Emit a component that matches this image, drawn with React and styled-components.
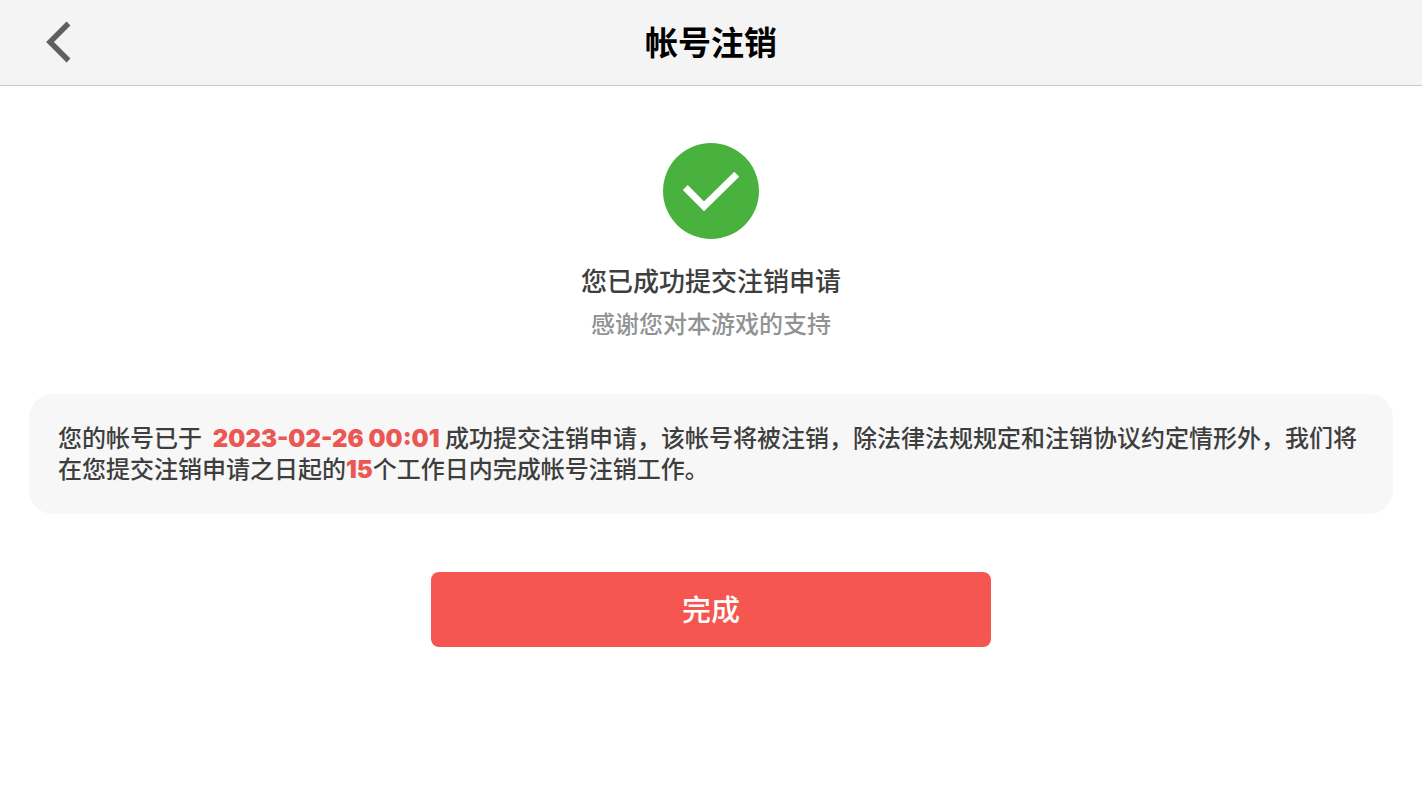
import React from "react";
import styled, { createGlobalStyle } from "styled-components";

const GlobalStyle = createGlobalStyle`
  * {
    box-sizing: border-box;
  }

  body {
    margin: 0;
    background: #ffffff;
    color: #3e3e3e;
    font-family: "Noto Sans CJK SC", sans-serif;
    font-weight: 500;
  }
`;

const Header = styled.header`
  display: grid;
  grid-template-columns: 1fr auto 1fr;
  align-items: center;
  height: 86px;
  padding: 0 36px;
  background: #f4f4f4;
  border-bottom: 1px solid #c8c8c8;
`;

const BackButton = styled.button`
  display: flex;
  align-items: center;
  justify-content: center;
  justify-self: start;
  width: 44px;
  height: 44px;
  padding: 0;
  border: 0;
  background: transparent;
  color: #5f5f5f;
  cursor: pointer;
`;

const Title = styled.h1`
  margin: 0;
  padding-bottom: 4px;
  color: #000000;
  font-size: 33px;
  line-height: 48px;
  font-weight: 700;
`;

const Main = styled.main`
  display: flex;
  flex-direction: column;
  align-items: center;
  padding: 57px 29px;
`;

const SuccessIcon = styled.svg`
  display: block;
  width: 96px;
  height: 96px;
`;

const Status = styled.h2`
  margin: 21px 0 0;
  font-size: 26px;
  line-height: 40px;
  font-weight: 500;
`;

const Thanks = styled.p`
  margin: 5px 0 0;
  color: #929292;
  font-size: 24px;
  line-height: 36px;
`;

const Notice = styled.p`
  width: 100%;
  margin: 53px 0 0;
  padding: 27px 24px 31px 29px;
  border-radius: 24px;
  background: #f7f7f7;
  font-size: 24px;
  line-height: 31px;
`;

const Highlight = styled.strong`
  color: #eb5752;
  font-family: Inter, "Noto Sans CJK SC", sans-serif;
  font-size: 24px;
  line-height: 24px;
  font-weight: 900;
`;

const DoneButton = styled.button`
  width: 100%;
  max-width: 560px;
  height: 75px;
  margin-top: 58px;
  padding: 0 0 3px;
  border: 0;
  border-radius: 8px;
  background: #f5564f;
  color: #ffffff;
  font-family: inherit;
  font-size: 29px;
  line-height: 40px;
  font-weight: 500;
  cursor: pointer;
`;

export default function App() {
  return (
    <>
      <GlobalStyle />
      <Header>
        <BackButton type="button" aria-label="返回">
          <svg width="44" height="44" viewBox="0 0 44 44" fill="none" aria-hidden="true">
            <path d="M32.5 2.5 L14 21 L32.5 39.5" stroke="currentColor" strokeWidth="5.5" />
          </svg>
        </BackButton>
        <Title>帐号注销</Title>
      </Header>
      <Main>
        <SuccessIcon viewBox="0 0 97 97" aria-hidden="true">
          <circle cx="48.5" cy="48.5" r="48.5" fill="#49b13d" />
          <path d="M22.5 45 L41.5 64 L74.5 31.5" fill="none" stroke="#ffffff" strokeWidth="7" />
        </SuccessIcon>
        <Status>您已成功提交注销申请</Status>
        <Thanks>感谢您对本游戏的支持</Thanks>
        <Notice>
          您的帐号已于&nbsp; <Highlight>2023-02-26 00:01</Highlight> 成功提交注销申请，该帐号将被注销，除法律法规规定和注销协议约定情形外，我们将在您提交注销申请之日起的<Highlight>15</Highlight>个工作日内完成帐号注销工作。
        </Notice>
        <DoneButton type="button">完成</DoneButton>
      </Main>
    </>
  );
}
